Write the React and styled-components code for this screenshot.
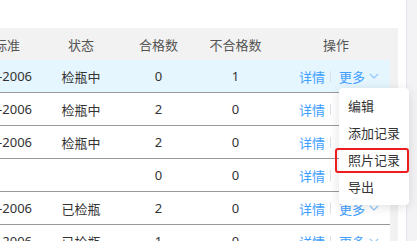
import styled, { createGlobalStyle } from 'styled-components';

const GlobalStyle = createGlobalStyle`
  html, body {
    margin: 0;
    padding: 0;
    background: #fff;
  }
  body {
    font-family: "Noto Sans", "Noto Sans CJK SC", sans-serif;
  }
`;

// whole visible area
const Page = styled.div`
  position: relative;
  width: 417px;
  height: 241px;
  overflow: hidden;
  display: flex;
`;

const TableArea = styled.div`
  width: 398px;
  padding-top: 28px;
`;

// grey background shows through on the scrollbar gutter
const Table = styled.div`
  background: #f2f2f2;
  font-size: 13px;
`;

const HeadRow = styled.div`
  display: flex;
  height: 32px;
  align-items: center;
  color: #555;
`;

const Body = styled.div`
  padding-right: 8px;
`;

const Row = styled.div`
  display: flex;
  height: 32px;
  align-items: center;
  border-bottom: 1px solid #999;
  background: ${p => (p.$active ? '#e6f6fe' : '#fff')};
  color: #333;
`;

const Cell = styled.div`
  width: ${p => p.$w}px;
  flex: ${p => (p.$grow ? 1 : 'none')};
  display: flex;
  justify-content: center;
  align-items: center;
  white-space: nowrap;
`;

// first column is scrolled off to the left
const CutCell = styled.div`
  width: 42px;
  flex: none;
  display: flex;
  justify-content: flex-end;
  overflow: hidden;
  white-space: nowrap;
  padding-right: ${p => p.$pr}px;
  box-sizing: border-box;
`;

const OpCell = styled.div`
  flex: 1;
  display: flex;
  align-items: center;
  padding-left: 25px;
  white-space: nowrap;
`;

const Link = styled.span`
  color: #409eff;
  display: inline-flex;
  align-items: center;
`;

const Divider = styled.span`
  width: 1px;
  height: 11px;
  background: #dcdfe6;
  margin: 0 8px 0 5px;
`;

const Gap = styled.div`
  width: 8px;
`;

const ScrollTrack = styled.div`
  width: 10px;
  border-left: 1px solid #e4e4ea;
  background: #f3f3f6;
`;

const Menu = styled.div`
  position: absolute;
  left: 339px;
  top: 88px;
  width: 70px;
  padding: 5px 0 4px;
  background: #fff;
  border-radius: 4px;
  box-shadow: 0 2px 12px rgba(0, 0, 0, 0.12);
  font-size: 13px;
  color: #333;
`;

const MenuItem = styled.div`
  height: 27px;
  line-height: 27px;
  padding: 0 9px;
  white-space: nowrap;
`;

// red annotation box drawn over the menu
const Highlight = styled.div`
  position: absolute;
  left: 335px;
  top: 148px;
  width: 74px;
  height: 25px;
  box-sizing: border-box;
  border: 2px solid #ee1c1c;
  border-radius: 3px;
`;

const Chevron = () => (
  <svg width="10" height="10" viewBox="0 0 10 10" style={{ marginLeft: 4 }}>
    <polyline points="1,3 5,7 9,3" fill="none" stroke="#8cc5ff" strokeWidth="1.1" />
  </svg>
);

const rows = [
  { std: 'GB/T 13004-2006', state: '检瓶中', ok: 0, bad: 1, active: true },
  { std: 'GB/T 13004-2006', state: '检瓶中', ok: 2, bad: 0 },
  { std: 'GB/T 13004-2006', state: '检瓶中', ok: 2, bad: 0 },
  { std: '', state: '', ok: 0, bad: 0 },
  { std: 'GB/T 13004-2006', state: '已检瓶', ok: 2, bad: 0 },
  { std: 'GB/T 13004-2006', state: '已检瓶', ok: 1, bad: 0 },
];

export default function App() {
  return (
    <Page>
      <GlobalStyle />
      <TableArea>
        <Table>
          <HeadRow>
            <CutCell $pr={22}>检验标准</CutCell>
            <Cell $w={78}>状态</Cell>
            <Cell $w={77}>合格数</Cell>
            <Cell $w={77}>不合格数</Cell>
            <Cell $grow>操作</Cell>
          </HeadRow>
          <Body>
            {rows.map((r, i) => (
              <Row key={i} $active={r.active}>
                <CutCell $pr={10}>{r.std}</CutCell>
                <Cell $w={78}>{r.state}</Cell>
                <Cell $w={77}>{r.ok}</Cell>
                <Cell $w={77}>{r.bad}</Cell>
                <OpCell>
                  <Link>详情</Link>
                  <Divider />
                  <Link>
                    更多
                    <Chevron />
                  </Link>
                </OpCell>
              </Row>
            ))}
          </Body>
        </Table>
      </TableArea>
      <Gap />
      <ScrollTrack />
      <Menu>
        <MenuItem>编辑</MenuItem>
        <MenuItem>添加记录</MenuItem>
        <MenuItem>照片记录</MenuItem>
        <MenuItem>导出</MenuItem>
      </Menu>
      <Highlight />
    </Page>
  );
}
